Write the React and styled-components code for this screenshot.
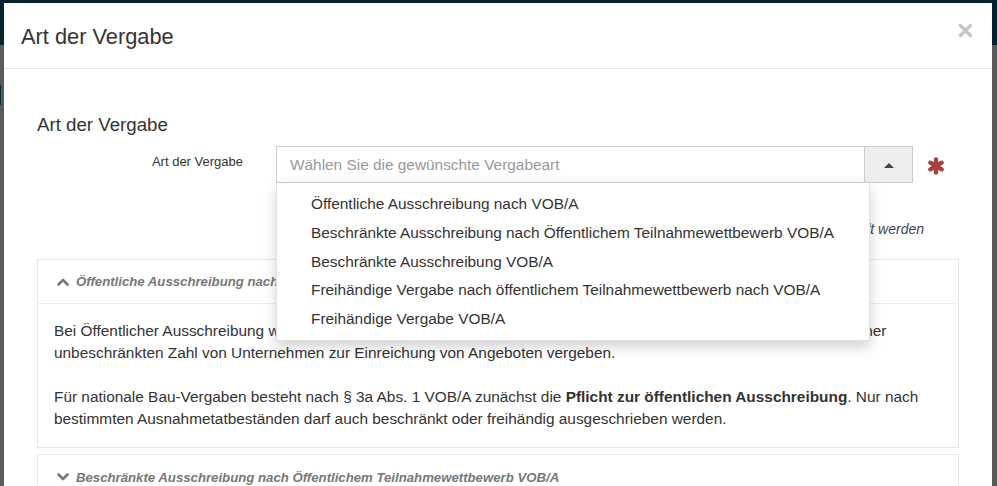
import React from "react";
import styled, { createGlobalStyle } from "styled-components";

const Global = createGlobalStyle`
  html, body { margin: 0; padding: 0; }
  body {
    font-family: "Liberation Sans", Arial, sans-serif;
    color: #333;
    overflow: hidden;
  }
  * { box-sizing: border-box; }
`;

const Backdrop = styled.div`
  height: 100vh;
  padding: 3px 5px 0 4px;
  overflow: hidden;
  background:
    linear-gradient(#0a2b38, #0a2b38) 0 85px / 1px 20px no-repeat,
    linear-gradient(#06222e 0 45px, #5b5b5b 45px 100%);
`;

const Modal = styled.div`
  background: #fff;
  height: 100%;
  display: flex;
  flex-direction: column;
  overflow: hidden;
`;

const Header = styled.div`
  flex-shrink: 0;
  display: flex;
  justify-content: space-between;
  align-items: flex-start;
  height: 66px;
  padding: 0 19px 0 17px;
  border-bottom: 1px solid #e5e5e5;
`;

const Title = styled.h4`
  margin: 0;
  padding-top: 21px;
  font-size: 21.8px;
  line-height: 26px;
  font-weight: normal;
  color: #333;
`;

const CloseButton = styled.button`
  margin-top: 19px;
  padding: 0;
  border: 0;
  background: none;
  width: 16px;
  height: 16px;
  display: flex;
  align-items: center;
  justify-content: center;
  cursor: pointer;
`;

const Body = styled.div`
  flex-shrink: 0;
  padding: 46px 33px 0 33px;
`;

const SectionTitle = styled.h3`
  margin: 0 0 11px 0;
  font-size: 18.7px;
  line-height: 20px;
  font-weight: normal;
  color: #333;
`;

const FormRow = styled.div`
  display: grid;
  grid-template-columns: 206px 637px 17px;
  column-gap: 33px;
  position: relative;
  & > :nth-child(3) { margin-left: -19px; }
`;

const Label = styled.label`
  text-align: right;
  font-size: 13px;
  line-height: 20px;
  padding-top: 6px;
  color: #333;
`;

const SelectWrap = styled.div`
  position: relative;
`;

const SelectBox = styled.div`
  display: flex;
  height: 37px;
  border: 1px solid #ccc;
  background: #fff;
`;

const Placeholder = styled.span`
  flex: 1;
  padding-left: 13px;
  font-size: 15.4px;
  line-height: 35px;
  color: #999;
`;

const ToggleButton = styled.span`
  width: 48px;
  background: #eee;
  border-left: 1px solid #ccc;
  display: flex;
  align-items: center;
  justify-content: center;
`;

const Caret = styled.span`
  width: 0;
  height: 0;
  border-left: 5px solid transparent;
  border-right: 5px solid transparent;
  border-bottom: 5px solid #444;
  margin-top: 2px;
`;

const Required = styled.span`
  display: flex;
  align-items: center;
  height: 37px;
  padding-top: 2px;
`;

const Menu = styled.ul`
  position: absolute;
  top: 37px;
  left: 0;
  width: 594px;
  margin: 0;
  padding: 7px 0 6px;
  list-style: none;
  background: #fff;
  border: 1px solid #e2e2e2;
  border-top: 0;
  box-shadow: 0 6px 12px rgba(0, 0, 0, 0.18);
  z-index: 10;
`;

const MenuItem = styled.li`
  padding: 4px 20px 4px 34px;
  font-size: 15.4px;
  line-height: 20.75px;
  color: #333;
  white-space: nowrap;
`;

const HelpRow = styled.div`
  margin-top: 36px;
  display: flex;
  justify-content: flex-end;
  padding-right: 35px;
`;

const Help = styled.span`
  font-size: 14px;
  line-height: 20px;
  font-style: italic;
  color: #444;
`;

const Panel = styled.div`
  border: 1px solid #e6e6e6;
  margin-top: ${(p) => p.$gap}px;
  background: #fff;
`;

const PanelHeader = styled.div`
  height: 44px;
  display: flex;
  align-items: center;
  padding-left: 19px;
  gap: 7px;
  border-bottom: ${(p) => (p.$open ? "1px solid #eee" : "0")};
`;

const PanelTitle = styled.span`
  font-size: 13.2px;
  font-weight: bold;
  font-style: italic;
  color: #777;
`;

const PanelBody = styled.div`
  padding: 16px 16px 17px 16px;
  font-size: 15.4px;
  line-height: 22px;
  color: #333;
`;

const Paragraph = styled.p`
  margin: 0 0 22px 0;
  &:last-child { margin-bottom: 0; }
`;

const Chevron = ({ up }) => (
  <svg width="12" height="8" viewBox="0 0 12 8">
    <polyline
      points={up ? "1.5,6.5 6,2 10.5,6.5" : "1.5,1.5 6,6 10.5,1.5"}
      fill="none"
      stroke="#777"
      strokeWidth="2.6"
      strokeLinecap="round"
      strokeLinejoin="round"
    />
  </svg>
);

const Asterisk = () => (
  <svg width="18" height="18" viewBox="0 0 18 18">
    <g stroke="#a8403e" strokeWidth="4.4" strokeLinecap="round">
      <line x1="9" y1="2.4" x2="9" y2="15.6" />
      <line x1="3.3" y1="5.7" x2="14.7" y2="12.3" />
      <line x1="3.3" y1="12.3" x2="14.7" y2="5.7" />
    </g>
  </svg>
);

const CloseIcon = () => (
  <svg width="15" height="15" viewBox="0 0 15 15">
    <g stroke="#c6c6c6" strokeWidth="3.4" strokeLinecap="round">
      <line x1="2.5" y1="2.5" x2="12.5" y2="12.5" />
      <line x1="12.5" y1="2.5" x2="2.5" y2="12.5" />
    </g>
  </svg>
);

const options = [
  "Öffentliche Ausschreibung nach VOB/A",
  "Beschränkte Ausschreibung nach Öffentlichem Teilnahmewettbewerb VOB/A",
  "Beschränkte Ausschreibung VOB/A",
  "Freihändige Vergabe nach öffentlichem Teilnahmewettbewerb nach VOB/A",
  "Freihändige Vergabe VOB/A",
];

export default function App() {
  return (
    <>
      <Global />
      <Backdrop>
        <Modal>
          <Header>
            <Title>Art der Vergabe</Title>
            <CloseButton aria-label="Schließen">
              <CloseIcon />
            </CloseButton>
          </Header>
          <Body>
            <SectionTitle>Art der Vergabe</SectionTitle>
            <FormRow>
              <Label>Art der Vergabe</Label>
              <SelectWrap>
                <SelectBox>
                  <Placeholder>Wählen Sie die gewünschte Vergabeart</Placeholder>
                  <ToggleButton>
                    <Caret />
                  </ToggleButton>
                </SelectBox>
                <Menu>
                  {options.map((o) => (
                    <MenuItem key={o}>{o}</MenuItem>
                  ))}
                </Menu>
              </SelectWrap>
              <Required>
                <Asterisk />
              </Required>
            </FormRow>
            <HelpRow>
              <Help>Es muss eine Vergabeart ausgewählt werden</Help>
            </HelpRow>
            <Panel $gap={20}>
              <PanelHeader $open>
                <Chevron up />
                <PanelTitle>Öffentliche Ausschreibung nach VOB/A</PanelTitle>
              </PanelHeader>
              <PanelBody>
                <Paragraph>
                  Bei Öffentlicher Ausschreibung werden Bauleistungen im vorgeschriebenen
                  Verfahren nach öffentlicher Aufforderung einer unbeschränkten Zahl von
                  Unternehmen zur Einreichung von Angeboten vergeben.
                </Paragraph>
                <Paragraph>
                  Für nationale Bau-Vergaben besteht nach § 3a Abs. 1 VOB/A zunächst die{" "}
                  <strong>Pflicht zur öffentlichen Ausschreibung</strong>. Nur nach bestimmten
                  Ausnahmetatbeständen darf auch beschränkt oder freihändig ausgeschrieben
                  werden.
                </Paragraph>
              </PanelBody>
            </Panel>
            <Panel $gap={6}>
              <PanelHeader>
                <Chevron />
                <PanelTitle>
                  Beschränkte Ausschreibung nach Öffentlichem Teilnahmewettbewerb VOB/A
                </PanelTitle>
              </PanelHeader>
            </Panel>
          </Body>
        </Modal>
      </Backdrop>
    </>
  );
}
